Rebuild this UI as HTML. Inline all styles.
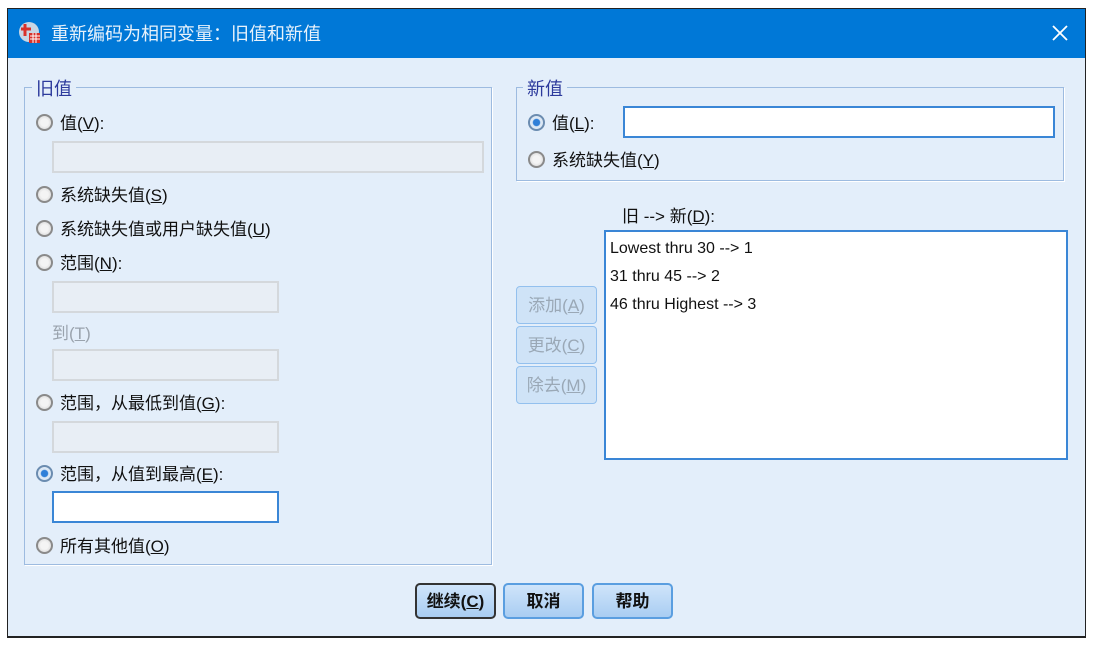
<!DOCTYPE html>
<html><head><meta charset="utf-8"><style>
body{margin:0;width:1100px;height:650px;background:#fff;position:relative;overflow:hidden;font-family:"Liberation Sans","Noto Sans CJK SC",sans-serif;font-size:17px;color:#111}
.a{position:absolute}
#dlg{left:7px;top:8px;width:1077px;height:627px;border:1px solid #222;border-bottom:2px solid #222;background:#e3eefa}
#title{left:0;top:0;width:1077px;height:49px;background:#0078d7;color:#e8f2fb;font-size:18px}
.grp{border:1px solid #9dbbe0;box-shadow:1px 1px 0 #fff}
.leg{background:#e3eefa;color:#2c3a9c;padding:0 4px;font-size:18px;line-height:20px}
.rad{width:13px;height:13px;border-radius:50%;border:2px solid #8a8a8a;background:radial-gradient(circle,#f4f4f4 40%,#cfcfcf 100%)}
.rad.on{border-color:#6b8cb0;background:radial-gradient(circle,#2f7fd8 35%,#dce8f5 45%)}
.lab{line-height:20px;white-space:nowrap;margin-top:2px}
u{text-decoration:underline}
.inp{background:#e8eef5;border:2px solid #d4d8dc;box-sizing:border-box}
.inp.w{background:#fff;border:2px solid #3a86d6}
.gray{color:#9aa3ad}
.btn{box-sizing:border-box;border:1px solid #93c0ee;border-radius:4px;background:#cfe3f7;color:#9aa8b6;text-align:center;line-height:38px;font-size:17px}
.bb{box-sizing:border-box;border:2px solid #5a9ee0;border-radius:5px;background:linear-gradient(#cfe4fa,#a9cdf2);text-align:center;line-height:34px;font-size:17px;color:#111;font-weight:bold}
</style></head><body>
<div id="dlg" class="a">
 <div id="title" class="a">
  <svg class="a" style="left:10px;top:12px" width="24" height="24" viewBox="0 0 24 24"><circle cx="11" cy="11" r="10" fill="#c9d6e4"/><rect x="11" y="12" width="11" height="10" fill="#d9312a"/><path d="M12 15h10M12 18h10M15 12v10M18 12v10" stroke="#fff" stroke-width="1"/><path d="M3 8h10M7 3v12" stroke="#d9312a" stroke-width="3"/></svg>
  <div class="a" style="left:43px;top:14px;line-height:22px">重新编码为相同变量：旧值和新值</div>
  <svg class="a" style="left:1043px;top:15px" width="18" height="18" viewBox="0 0 18 18"><path d="M2 2L16 16M16 2L2 16" stroke="#fff" stroke-width="1.8"/></svg>
 </div>
</div>
<div class="a grp" style="left:24px;top:87px;width:466px;height:476px"></div>
<div class="a leg" style="left:32px;top:79px">旧值</div>
<div class="a rad" style="left:36px;top:114px"></div><div class="a lab" style="left:60px;top:112px">值(<u>V</u>):</div>
<div class="a inp" style="left:52px;top:141px;width:432px;height:32px"></div>
<div class="a rad" style="left:36px;top:186px"></div><div class="a lab" style="left:60px;top:184px">系统缺失值(<u>S</u>)</div>
<div class="a rad" style="left:36px;top:220px"></div><div class="a lab" style="left:60px;top:218px">系统缺失值或用户缺失值(<u>U</u>)</div>
<div class="a rad" style="left:36px;top:254px"></div><div class="a lab" style="left:60px;top:252px">范围(<u>N</u>):</div>
<div class="a inp" style="left:52px;top:281px;width:227px;height:32px"></div>
<div class="a lab gray" style="left:52px;top:322px">到(<u>T</u>)</div>
<div class="a inp" style="left:52px;top:349px;width:227px;height:32px"></div>
<div class="a rad" style="left:36px;top:394px"></div><div class="a lab" style="left:60px;top:392px">范围，从最低到值(<u>G</u>):</div>
<div class="a inp" style="left:52px;top:421px;width:227px;height:32px"></div>
<div class="a rad on" style="left:36px;top:465px"></div><div class="a lab" style="left:60px;top:463px">范围，从值到最高(<u>E</u>):</div>
<div class="a inp w" style="left:52px;top:491px;width:227px;height:32px"></div>
<div class="a rad" style="left:36px;top:537px"></div><div class="a lab" style="left:60px;top:535px">所有其他值(<u>O</u>)</div>
<div class="a grp" style="left:516px;top:87px;width:546px;height:92px"></div>
<div class="a leg" style="left:523px;top:79px">新值</div>
<div class="a rad on" style="left:528px;top:114px"></div><div class="a lab" style="left:552px;top:112px">值(<u>L</u>):</div>
<div class="a inp w" style="left:623px;top:106px;width:432px;height:32px"></div>
<div class="a rad" style="left:528px;top:151px"></div><div class="a lab" style="left:552px;top:149px">系统缺失值(<u>Y</u>)</div>
<div class="a lab" style="left:622px;top:205px">旧 --&gt; 新(<u>D</u>):</div>
<div class="a" style="left:604px;top:230px;width:460px;height:226px;background:#fff;border:2px solid #3a86d6"></div>
<div class="a lab" style="left:610px;top:237px;font-size:16px">Lowest thru 30 --&gt; 1</div>
<div class="a lab" style="left:610px;top:265px;font-size:16px">31 thru 45 --&gt; 2</div>
<div class="a lab" style="left:610px;top:293px;font-size:16px">46 thru Highest --&gt; 3</div>
<div class="a btn" style="left:516px;top:286px;width:81px;height:38px">添加(<u>A</u>)</div>
<div class="a btn" style="left:516px;top:326px;width:81px;height:38px">更改(<u>C</u>)</div>
<div class="a btn" style="left:516px;top:366px;width:81px;height:38px">除去(<u>M</u>)</div>
<div class="a bb" style="left:415px;top:583px;width:81px;height:36px;border-color:#333">继续(<u>C</u>)</div>
<div class="a bb" style="left:503px;top:583px;width:81px;height:36px">取消</div>
<div class="a bb" style="left:592px;top:583px;width:81px;height:36px">帮助</div>
</body></html>
